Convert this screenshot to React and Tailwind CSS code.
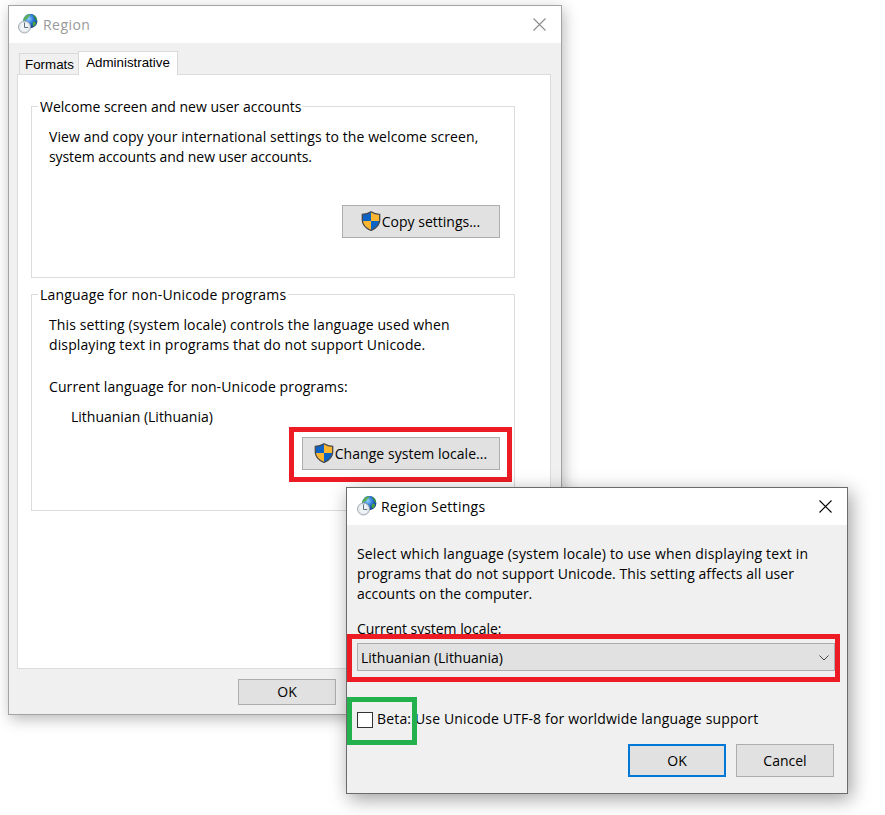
function GlobeClockIcon({ className = '' }) {
  return (
    <svg className={`h-5 w-5 shrink-0 ${className}`} viewBox="0 0 20 20">
      <defs>
        <radialGradient id="globe" cx="0.4" cy="0.35" r="0.75">
          <stop offset="0" stopColor="#8fd4fa" />
          <stop offset="0.45" stopColor="#2c74d6" />
          <stop offset="1" stopColor="#0a2478" />
        </radialGradient>
      </defs>
      <circle cx="12.200" cy="7" r="7.200" fill="url(#globe)" />
      <path d="M5.600 5C6.600 2.500 8.800.8 11.500.3l1.300.9-2.300 1.200-.9 2-2.300 1.300-.9 1.600-1.200-.4z" fill="#5fae50" />
      <path d="M14.800.8c2 .7 3.500 2.200 4.100 4.200l.2 2.200-1.500-1.400-.8-2.300-1.600-1z" fill="#3c9a34" />
      <path d="M15.300 7.500l2.200.4.6 1.500-1.500 2.400-1.500.8-.5-2.600z" fill="#49a43b" />
      <circle cx="6.500" cy="13" r="6" fill="#e6eaee" stroke="#98a4ad" strokeWidth="0.900" />
      <circle cx="6.500" cy="13" r="4.600" fill="#f1f4f6" stroke="#c3ccd3" strokeWidth="0.700" strokeDasharray="0.800 1.610" />
      <path d="M6.500 8.500V13.500H10.200" fill="none" stroke="#5c7080" strokeWidth="1" />
    </svg>
  );
}

function ShieldIcon() {
  return (
    <svg className="relative -left-px -top-px h-5 w-5 shrink-0" viewBox="0 0 20 20">
      <path d="M10 .8C7.500 2.500 4.500 3.300 1.300 3.300V10H10z" fill="#0b63c5" />
      <path d="M10 .8c2.500 1.700 5.500 2.500 8.700 2.500V10H10z" fill="#fdb62f" />
      <path d="M1.300 10H10v9.500C5.500 17.600 2 14.800 1.300 10z" fill="#fdb62f" />
      <path d="M18.700 10H10v9.500c4.500-1.900 8-4.700 8.700-9.500z" fill="#0b63c5" />
      <path d="M10 .8C7.500 2.500 4.500 3.300 1.300 3.300V9c0 5 3.700 8.300 8.700 10.500 5-2.200 8.700-5.500 8.700-10.500V3.300C15.500 3.300 12.500 2.500 10 .8z" fill="none" stroke="#48494b" strokeWidth="1.300" />
    </svg>
  );
}

function CloseIcon({ className }) {
  return (
    <svg className={`h-[13px] w-[13px] ${className}`} viewBox="0 0 13 13" fill="none" stroke="currentColor">
      <path d="M.5.5l12 12M12.500.5l-12 12" strokeWidth="1.100" />
    </svg>
  );
}

function Button({ className = '', children }) {
  return (
    <button type="button" className={`flex items-center justify-center whitespace-nowrap bg-[#e1e1e1] ${className}`}>
      {children}
    </button>
  );
}

function RegionWindow() {
  return (
    <div className="absolute left-2 top-[5px] flex h-[710px] w-[554px] flex-col border border-[#a3a3a3] bg-[#f0f0f0] shadow-[2px_4px_14px_rgba(0,0,0,0.28)]">
      {/* Title bar */}
      <div className="flex h-[37px] shrink-0 items-center bg-white pl-[9px] pr-[15px] text-[#999999]">
        <GlobeClockIcon className="mb-px" />
        <span className="ml-[5px] grow tracking-[0.45px]">Region</span>
        <CloseIcon className="mb-px text-[#8c8c8c]" />
      </div>

      {/* Tabs */}
      <div className="ml-[10px] mt-2 flex h-[23px] shrink-0 items-end font-['Liberation_Sans',Arial,sans-serif] text-[13.33px]">
        <div className="flex h-[21px] w-[59px] items-center justify-center border-l border-t border-[#d9d9d9] pl-px pt-px">Formats</div>
        <div className="relative z-10 -mb-px flex h-6 w-[100px] items-center justify-center border border-b-0 border-[#d9d9d9] bg-white pb-px">
          Administrative
        </div>
      </div>

      {/* Tab page */}
      <div className="ml-2 flex h-[595px] w-[534px] shrink-0 flex-col border border-[#dcdcdc] bg-white pl-[13px] pt-[22px]">
        <fieldset className="h-[181px] w-[484px] border border-[#dcdcdc] pl-[17px]">
          <legend className="-ml-[11px] h-[19px] px-[2px]">Welcome screen and new user accounts</legend>
          <p className="mt-[11px] whitespace-nowrap">
            <span className="tracking-[0.09px]">View and copy your international settings to the welcome screen,</span>
            <br />
            <span className="tracking-[-0.08px]">system accounts and new user accounts.</span>
          </p>
          <Button className="ml-[293px] mt-[38px] h-[33px] w-[158px] border border-[#adadad]">
            <ShieldIcon />
            Copy settings...
          </Button>
        </fieldset>

        <fieldset className="mt-[7px] h-[226px] w-[484px] border border-[#dcdcdc] pl-[17px]">
          <legend className="-ml-[11px] h-[19px] px-[2px] tracking-[0.18px]">Language for non-Unicode programs</legend>
          <p className="mt-[11px] whitespace-nowrap tracking-[0.12px]">
            This setting (system locale) controls the language used when
            <br />
            displaying text in programs that do not support Unicode.
          </p>
          <p className="mt-[22px] tracking-[0.11px]">Current language for non-Unicode programs:</p>
          <p className="ml-[22px] mt-[10px]">Lithuanian (Lithuania)</p>
          <div className="relative ml-[253px] mt-[10px] w-[198px]">
            <Button className="h-[33px] w-[198px] border border-[#adadad]">
              <ShieldIcon />
              <span className="tracking-[0.04px]">Change system locale...</span>
            </Button>
            <div className="absolute -left-[13px] -top-[10px] h-[55px] w-[223px] border-5 border-[#ed1c24]" />
          </div>
        </fieldset>
      </div>

      <Button className="ml-[229px] mt-[10px] h-[26px] w-[98px] border border-[#adadad]">OK</Button>
    </div>
  );
}

function RegionSettingsDialog() {
  return (
    <div className="absolute left-[346px] top-[487px] flex h-[307px] w-[502px] flex-col border border-[#6b6b6b] bg-[#f0f0f0] shadow-[3px_5px_18px_rgba(0,0,0,0.38)]">
      {/* Title bar */}
      <div className="flex h-[37px] shrink-0 items-center bg-white pl-[10px] pr-[15px]">
        <GlobeClockIcon className="mb-px" />
        <span className="ml-1 grow tracking-[0.28px]">Region Settings</span>
        <CloseIcon className="mb-px text-black" />
      </div>

      <div className="flex flex-col pl-[10px] pt-[19px]">
        <p className="whitespace-nowrap">
          <span className="tracking-[0.165px]">Select which language (system locale) to use when displaying text in</span>
          <br />
          <span className="tracking-[0.075px]">programs that do not support Unicode. This setting affects all user</span>
          <br />
          accounts on the computer.
        </p>
        <p className="mt-[15px] tracking-[-0.04px]">Current system locale:</p>
        <div className="relative mt-1 flex h-7 w-[478px] items-center justify-between border border-[#adadad] bg-[#e1e1e1] pl-[3px] pr-[5px]">
          <span className="pt-[2px]">Lithuanian (Lithuania)</span>
          <svg className="mt-px h-[6px] w-[10px]" viewBox="0 0 10 6" fill="none" stroke="#444444">
            <path d="M.5.5L5 5 9.500.5" />
          </svg>
          <div className="absolute -left-[11px] -top-[10px] h-12 w-[493px] border-5 border-[#ed1c24]" />
        </div>
        <label className="relative mt-[38px] flex h-5 items-center whitespace-nowrap">
          <span className="mt-[2px] h-4 w-4 border border-[#333333] bg-white" />
          <span className="ml-1 tracking-[0.16px]">Beta: Use Unicode UTF-8 for worldwide language support</span>
          <span className="absolute -left-[10px] -top-3 h-12 w-[70px] border-5 border-[#22b14c]" />
        </label>
        <div className="mt-[15px] flex gap-[10px] pl-[271px]">
          <Button className="h-[33px] w-[98px] border-2 border-[#0078d7]">OK</Button>
          <Button className="h-[33px] w-[98px] border border-[#adadad]">Cancel</Button>
        </div>
      </div>
    </div>
  );
}

function App() {
  return (
    <div className="relative h-[815px] w-[885px] overflow-hidden bg-white font-['Open_Sans','Noto_Sans',sans-serif] text-[14px] leading-5 text-black">
      <RegionWindow />
      <RegionSettingsDialog />
    </div>
  );
}

export default App;
